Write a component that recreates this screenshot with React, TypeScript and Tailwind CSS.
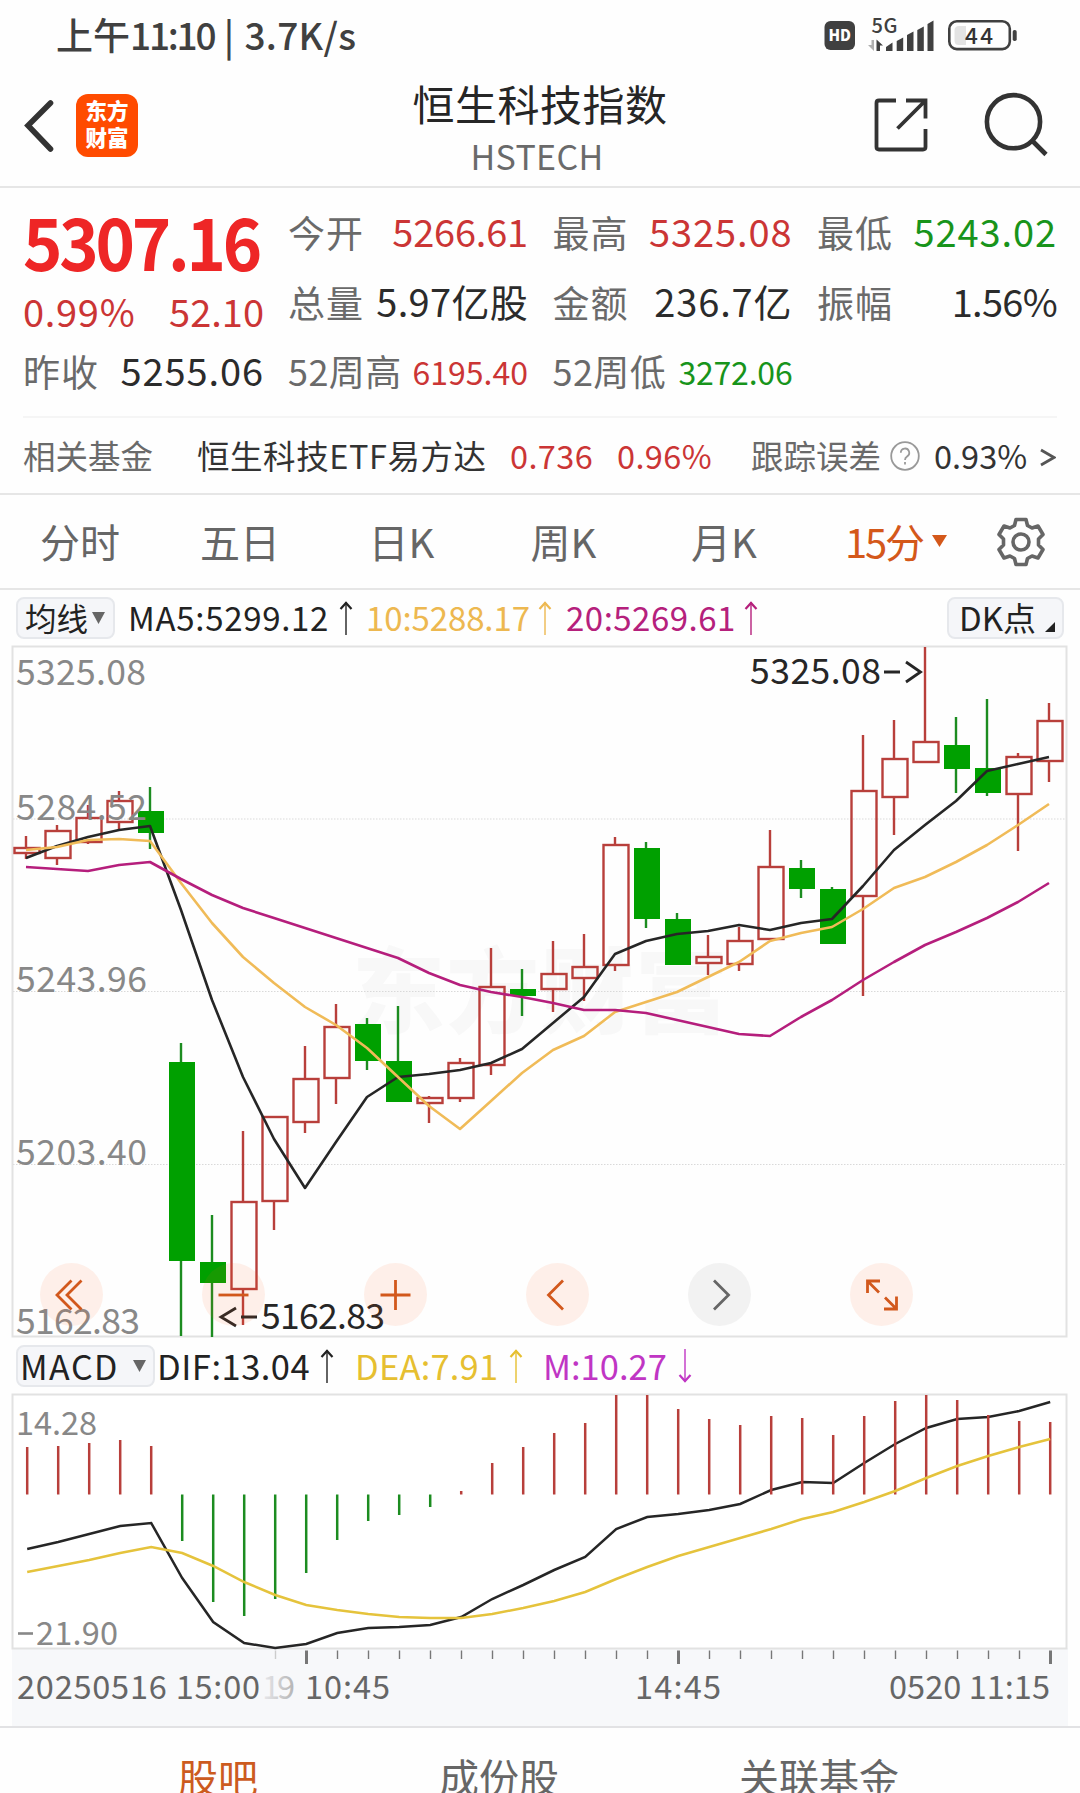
import React from "react";

const RED = "#b83f3b";
const GREEN = "#00a000";

// [high, bodyTop, bodyBottom, low, rising]
const candles: [number, number, number, number, number][] = [
  [836, 848, 853, 859, 1], [825, 831, 858, 865, 1], [805, 818, 842, 844, 1], [791, 801, 822, 830, 1],
  [787, 811, 833, 849, 0], [1043, 1062, 1261, 1336, 0], [1215, 1262, 1283, 1337, 0], [1131, 1202, 1289, 1325, 1],
  [1117, 1117, 1201, 1230, 1], [1046, 1079, 1122, 1133, 1], [1004, 1027, 1078, 1104, 1], [1018, 1024, 1061, 1070, 0],
  [1006, 1061, 1102, 1102, 0], [1096, 1098, 1103, 1123, 1], [1058, 1063, 1098, 1102, 1], [948, 987, 1065, 1075, 1],
  [969, 989, 996, 1016, 0], [941, 974, 989, 1012, 1], [934, 967, 978, 1001, 1], [837, 845, 965, 971, 1],
  [842, 848, 919, 928, 0], [913, 919, 965, 965, 0], [935, 957, 963, 975, 1], [927, 941, 964, 971, 1],
  [830, 867, 939, 939, 1], [860, 868, 889, 898, 0], [887, 889, 944, 944, 0], [735, 791, 896, 996, 1],
  [720, 759, 797, 835, 1], [647, 742, 762, 762, 1], [717, 745, 769, 793, 0], [699, 768, 793, 796, 0],
  [753, 757, 794, 851, 1], [703, 721, 761, 782, 1],
];
const ma5 = [858, 846, 837, 830, 826, 910, 1000, 1077, 1139, 1188, 1142, 1097, 1077, 1074, 1070, 1063, 1049, 1023, 997, 954, 941, 934, 931, 925, 930, 923, 919, 886, 850, 825, 801, 771, 764, 757];
const ma10 = [850, 847, 840, 839, 841, 883, 923, 957, 983, 1007, 1025, 1048, 1077, 1106, 1129, 1101, 1073, 1050, 1036, 1012, 1002, 992, 977, 962, 941, 933, 927, 909, 888, 877, 862, 845, 825, 804];
const ma20 = [867, 869, 871, 865, 862, 879, 895, 908, 918, 928, 938, 948, 958, 973, 985, 992, 997, 1003, 1010, 1010, 1013, 1020, 1027, 1034, 1036, 1017, 1000, 980, 962, 945, 932, 918, 902, 883];
const hist = [1447, 1446, 1443, 1440, 1446, 1541, 1602, 1616, 1599, 1573, 1540, 1521, 1515, 1507, 1491, 1463, 1447, 1433, 1423, 1395, 1395, 1409, 1419, 1425, 1416, 1418, 1435, 1416, 1401, 1395, 1400, 1415, 1421, 1422];
const dif = [1549, 1542, 1534, 1526, 1523, 1578, 1622, 1643, 1648, 1644, 1633, 1628, 1627, 1625, 1617, 1599, 1585, 1570, 1557, 1529, 1517, 1514, 1510, 1504, 1490, 1482, 1483, 1463, 1444, 1428, 1419, 1417, 1411, 1402];
const dea = [1572, 1566, 1560, 1553, 1547, 1553, 1566, 1582, 1595, 1605, 1610, 1614, 1617, 1618, 1618, 1614, 1608, 1601, 1592, 1579, 1567, 1556, 1547, 1538, 1529, 1519, 1512, 1502, 1491, 1478, 1466, 1456, 1447, 1439];

const points = (ys: number[], x0: number) => ys.map((y, i) => `${x0 + i * 31},${y}`).join(" ");

function Label({ x, y, w, size, fill = "#888888", children }: { x: number; y: number; w: number; size: number; fill?: string; children: string }) {
  return (
    <text x={x} y={y} fontSize={size} fill={fill} textLength={w} lengthAdjust="spacing">
      {children}
    </text>
  );
}

function Arrow({ color, down = false }: { color: string; down?: boolean }) {
  return (
    <svg width="14" height="36" viewBox="0 0 14 36" fill="none" stroke={color} className={down ? "rotate-180" : ""}>
      <path d="M7 2V35" strokeWidth="1.4" />
      <path d="M1.5 9L7 3L12.5 9" strokeWidth="2.2" />
    </svg>
  );
}

function Stat({ label, value, tone = "text-[#2b2b2b]", spacing = "tracking-[0.9px]" }: { label: string; value: string; tone?: string; spacing?: string }) {
  const small = label.length > 2;
  return (
    <div className="flex items-center justify-between whitespace-nowrap">
      <span className={small ? "text-[36px] tracking-[0.4px] text-[#6a6a6a]" : "pt-[5px] text-[37px] tracking-[1px] text-[#6a6a6a]"}>{label}</span>
      <span className={`pt-px ${small ? "text-[32px]" : "text-[38px]"} ${spacing} ${tone}`}>{value}</span>
    </div>
  );
}

function StatusBar() {
  return (
    <div className="flex h-[62px] items-center pt-[8px] pr-[62px] pl-[56px] text-[#404040]">
      <span className="text-[37px] font-medium whitespace-pre">
        上午<span className="tracking-[-2.200px]">11:10</span><span className="tracking-[1px]"> | </span><span className="tracking-[0.300px]">3.7K/s</span>
      </span>
      <svg className="mt-px ml-auto overflow-visible" width="194" height="36" viewBox="825 18 194 36">
        <rect x="825.5" y="21" width="30.5" height="29" rx="6" fill="#404040" />
        <text x="829.5" y="41.3" fontSize="16" fontWeight="900" fill="#fff" textLength="22.5" lengthAdjust="spacingAndGlyphs">HD</text>
        <text x="872.5" y="32.8" fontSize="20" fontWeight="500" fill="#404040" textLength="26">5G</text>
        <path d="M875 40v11l-6-6h3.500v-5z" fill="#b0b0b0" />
        <path d="M877.500 51V39.500l6.500 6h-3V51z" fill="#404040" />
        <path d="M887 51v-4l6.500-4.500V51zM897.700 51V41l6.500-3.500V51zM908 51V35l6.500-3.500V51zM918.300 51V30l6.500-3.500V51zM928.500 51V24l6-3.500V51z" fill="#404040" />
        <rect x="950.300" y="21.300" width="60.500" height="27.800" rx="7.500" fill="none" stroke="#404040" strokeWidth="2.600" />
        <path d="M960 26h7v19h-7q-4.500 0-4.500-4.500v-10q0-4.500 4.500-4.500z" fill="#e3e3e3" />
        <text x="966" y="43.500" fontSize="22.500" fontWeight="500" fill="#333" textLength="28">44</text>
        <rect x="1013.700" y="30" width="4" height="11" rx="1.800" fill="#404040" />
      </svg>
    </div>
  );
}

function Header() {
  return (
    <header className="flex h-[126px] items-start border-b-2 border-[#e6e6e6]">
      <div className="flex w-[400px] items-center gap-[20px] pt-[32px] pl-[22px]">
        <svg className="-mt-[3px]" width="34" height="56" viewBox="0 0 34 56" fill="none" stroke="#333" strokeWidth="5.600" strokeLinecap="round">
          <path d="M28.500 7L6 29.500L28.500 53" />
        </svg>
        <div className="flex h-[63px] w-[62px] flex-col items-center justify-center rounded-[12px] bg-[#ff4b00] pb-[5px] text-[21.500px] leading-[27px] font-black text-white">
          <span>东方</span>
          <span>财富</span>
        </div>
      </div>
      <div className="flex w-[280px] flex-col items-center pt-[10px]">
        <h1 className="text-[42px] leading-[62px] tracking-[0.5px] text-[#262626]">恒生科技指数</h1>
        <span className="-mt-[3px] -ml-[6px] text-[34px] leading-[49px] tracking-[0.300px] text-[#6a6a6a]">HSTECH</span>
      </div>
      <div className="ml-auto flex gap-[55px] pt-[30px] pr-[31px]">
        <svg width="54" height="64" viewBox="875 92 54 64" fill="none" stroke="#333" strokeWidth="3.800">
          <path d="M897 100.500H880q-2.500 0-2.500 2.500v44q0 2.500 2.500 2.500h44q2.500 0 2.500-2.500v-18" />
          <path d="M907 100.500h19.500v18M926 101L898.500 128.500" />
        </svg>
        <svg width="66" height="66" viewBox="984 92 66 66" fill="none" stroke="#333" strokeWidth="4.600">
          <circle cx="1014.500" cy="121.700" r="26.600" />
          <path d="M1033 140.500L1047 154.500" />
        </svg>
      </div>
    </header>
  );
}

function Quote() {
  return (
    <section className="border-b-2 border-[#e6e6e6]">
      <div className="mx-[23px] flex border-b-2 border-[#f5f5f5] pt-[7px] pb-[11px]">
        <div className="w-[241px] whitespace-nowrap">
          <div className="flex h-[88px] w-[240px] origin-left scale-x-[0.93] items-center pt-[2px] text-[72px] font-bold tracking-[-3.500px] text-[#ee2626]">5307.16</div>
          <div className="flex h-[52px] items-center justify-between pt-[2px] text-[38px] text-[#cb3535]">
            <span className="tracking-[0.700px]">0.99%</span>
            <span>52.10</span>
          </div>
          <div className="h-[70px] pt-[4px]">
            <Stat label="昨收" value="5255.06" />
          </div>
        </div>
        <div className="ml-[24px] grid w-[769px] grid-cols-[240px_240px_240px] grid-rows-[70px_70px_70px] gap-x-[24.500px]">
          <Stat label="今开" value="5266.61" tone="text-[#cb3535]" spacing="tracking-[-0.200px]" />
          <Stat label="最高" value="5325.08" tone="text-[#cb3535]" />
          <Stat label="最低" value="5243.02" tone="text-[#18941b]" />
          <Stat label="总量" value="5.97亿股" spacing="tracking-[0.300px]" />
          <Stat label="金额" value="236.7亿" />
          <Stat label="振幅" value="1.56%" spacing="tracking-[-0.700px]" />
          <Stat label="52周高" value="6195.40" tone="text-[#cb3535]" spacing="tracking-normal" />
          <Stat label="52周低" value="3272.06" tone="text-[#18941b]" spacing="tracking-[-0.200px]" />
        </div>
      </div>
      <div className="flex h-[75px] items-center pr-[24px] pl-[23px] text-[32.500px] whitespace-nowrap text-[#333]">
        <span className="w-[174px] text-[#6a6a6a]">相关基金</span>
        <span className="w-[313px] tracking-[0.550px]">恒生科技ETF易方达</span>
        <span className="w-[107px] tracking-[0.400px] text-[#cb3535]">0.736</span>
        <span className="w-[134px] tracking-[0.400px] text-[#cb3535]">0.96%</span>
        <span className="text-[#6a6a6a]">跟踪误差</span>
        <svg className="ml-[9px]" width="30" height="30" viewBox="0 0 30 30" fill="none" stroke="#999" strokeWidth="1.800">
          <circle cx="15" cy="15" r="13.800" />
          <path d="M10.800 11.800a4.200 4.200 0 1 1 6.300 3.600q-2.100 1.300-2.100 3.600" />
          <path d="M15 21v2.400" />
        </svg>
        <span className="ml-[14px]">0.93%</span>
        <svg className="mt-[2px] ml-auto" width="16" height="24" viewBox="0 0 16 24" fill="none" stroke="#555" strokeWidth="2.800">
          <path d="M1 5L14 12.500L1 20" />
        </svg>
      </div>
    </section>
  );
}

function Periods() {
  return (
    <nav className="grid h-[95px] grid-cols-[160px_160px_163px_161px_160px_187px_60px] border-b-2 border-[#e6e6e6] text-[40px] text-[#666]">
      {["分时", "五日", "日K", "周K", "月K"].map((t) => (
        <span key={t} className="flex items-center justify-center pb-px">{t}</span>
      ))}
      <span className="flex items-center pb-px pl-[41px] text-[#d4581a]">
        <span className="tracking-[-2.200px]">15</span>分
        <svg className="ml-[7px]" width="15" height="12" viewBox="0 0 15 12"><path d="M0 0h15L7.500 12z" fill="#d4581a" /></svg>
      </span>
      <span className="flex items-center justify-center">
        <svg width="48" height="50" viewBox="-24 -25 48 50" fill="none" stroke="#666" strokeWidth="3.600" strokeLinejoin="round">
          <path d="M-5 -22.500H5L6.500 -16.500L11 -14L17 -16L22 -7.500L17.500 -3V3L22 7.500L17 16L11 14L6.500 16.500L5 22.500H-5L-6.500 16.500L-11 14L-17 16L-22 7.500L-17.500 3V-3L-22 -7.500L-17 -16L-11 -14L-6.500 -16.500Z" />
          <circle r="8" />
        </svg>
      </span>
    </nav>
  );
}

function DownTriangle() {
  return <svg width="13" height="12" viewBox="0 0 13 12"><path d="M0 0h13L6.500 12z" fill="#666" /></svg>;
}

function MaRow() {
  return (
    <div className="flex h-[55px] items-center pr-[16px] pl-[16px] text-[33px] leading-none whitespace-nowrap">
      <button className="flex h-[42px] w-[99px] items-center gap-[4px] rounded-[8px] border-2 border-[#e6e8ec] bg-[#f5f6f9] pl-[7px] text-[31.500px] leading-none text-[#222]">
        均线<DownTriangle />
      </button>
      <span className="ml-[13px] flex w-[238px] items-center gap-[10px] text-[#222]"><span className="tracking-[0.700px]">MA5:5299.12</span><Arrow color="#222" /></span>
      <span className="flex w-[200px] items-center gap-[8px] text-[#edb850]"><span className="tracking-[-0.100px]">10:5288.17</span><Arrow color="#edb850" /></span>
      <span className="flex items-center gap-[8px] text-[#b5207c]"><span className="tracking-[0.500px]">20:5269.61</span><Arrow color="#b5207c" /></span>
      <button className="ml-auto flex h-[42px] w-[117px] items-center rounded-[8px] border-2 border-[#e6e8ec] bg-[#f5f6f9] pl-[10px] text-[33px] leading-none text-[#222]">
        DK点
        <svg className="mt-[18px] ml-[9px]" width="10" height="10" viewBox="0 0 10 10"><path d="M10 0v10H0z" fill="#222" /></svg>
      </button>
    </div>
  );
}

function Candle({ d, i }: { d: [number, number, number, number, number]; i: number }) {
  const [hi, top, bot, lo, up] = d;
  const c = 26 + i * 31;
  if (up) {
    const left = Math.max(c - 11.5, 13.5);
    return (
      <g stroke={RED} strokeWidth="2.400" fill="none">
        <path d={`M${c} ${hi}V${top}M${c} ${bot}V${lo}`} />
        <rect x={left} y={top} width={c + 13.5 - left} height={bot - top} />
      </g>
    );
  }
  return (
    <g>
      <path d={`M${c} ${hi}V${lo}`} stroke="#1c8c20" strokeWidth="2.400" />
      <rect x={c - 12} y={top} width="26" height={bot - top} fill={GREEN} />
    </g>
  );
}

const controls: { name: string; path: string; muted?: boolean }[] = [
  { name: "first", path: "M31.500 17.500L17 32L31.500 46.500M41.500 17.500L27 32L41.500 46.500" },
  { name: "zoom out", path: "M16.500 32h30" },
  { name: "zoom in", path: "M16.500 32h30M31.500 17v30" },
  { name: "previous", path: "M37 17.500L22.500 32L37 46.500" },
  { name: "next", path: "M26 17.500L40.500 32L26 46.500", muted: true },
  { name: "expand", path: "M17.500 30V18H30M18 18.500L29 29.500M46.500 33.500V46H34M46 45.500L35 34.500" },
];

function PriceChart() {
  return (
    <div className="relative h-[693px]">
      <svg className="block" width="1080" height="693" viewBox="0 645 1080 693">
        <text x="352" y="1026" fontSize="93" fontWeight="900" fill="#f8f8f8" textLength="376">东方财富</text>
        {[819, 991.5, 1164.5].map((y) => (
          <path key={y} d={`M13 ${y}H1067`} stroke="#d9d9d9" strokeWidth="1.200" strokeDasharray="1.500 1.500" />
        ))}
        <rect x="12.500" y="646.500" width="1054" height="690" fill="none" stroke="#e2e2e2" strokeWidth="2" />
        {candles.map((d, i) => <Candle key={i} d={d} i={i} />)}
        <g fill="none" strokeWidth="2.600" strokeLinejoin="round">
          <polyline points={points(ma5, 26)} stroke="#262626" />
          <polyline points={points(ma10, 26)} stroke="#f0bb58" />
          <polyline points={points(ma20, 26)} stroke="#b51e7c" />
        </g>
        <Label x={16} y={685} w={130} size={35.5}>5325.08</Label>
        <Label x={16} y={820} w={131} size={35.5}>5284.52</Label>
        <Label x={16} y={992} w={131} size={35.5}>5243.96</Label>
        <Label x={16} y={1164.5} w={131} size={35.5}>5203.40</Label>
        <Label x={16} y={1333.5} w={124} size={35.5}>5162.83</Label>
        <Label x={750} y={684} w={131} size={35.5} fill="#262626">5325.08</Label>
        <path d="M884 672h16M906 662L920.500 672L906 682" fill="none" stroke="#262626" strokeWidth="2.800" />
        <Label x={261} y={1329} w={124} size={35.5} fill="#262626">5162.83</Label>
        <path d="M257 1317h-16M236 1308L221 1317L236 1326" fill="none" stroke="#262626" strokeWidth="2.800" />
      </svg>
      <div className="absolute top-[618px] left-[40px] flex gap-[99px]">
        {controls.map((c) => (
          <button key={c.name} aria-label={c.name} className={c.muted ? "h-[63px] w-[63px] rounded-full bg-[#999999]/12" : "h-[63px] w-[63px] rounded-full bg-[#ff5a14]/9"}>
            <svg width="63" height="63" viewBox="0 0 63 63" fill="none" stroke={c.muted ? "#666" : "#d2581c"} strokeWidth="2.800">
              <path d={c.path} />
            </svg>
          </button>
        ))}
      </div>
    </div>
  );
}

function MacdRow() {
  return (
    <div className="flex h-[55px] items-center pl-[16px] text-[34.500px] leading-none whitespace-nowrap">
      <button className="flex h-[42px] w-[139px] items-center justify-between rounded-[8px] border-2 border-[#e6e8ec] bg-[#f5f6f9] pr-[7px] pl-[2px] text-[34px] leading-none text-[#222]">
        <span className="tracking-[1.500px]">MACD</span><DownTriangle />
      </button>
      <span className="ml-[2px] flex w-[198px] items-center gap-[10px] text-[#222]"><span className="tracking-[0.500px]">DIF:13.04</span><Arrow color="#222" /></span>
      <span className="flex w-[188px] items-center gap-[11px] text-[#e6bf30]"><span className="tracking-[0.200px]">DEA:7.91</span><Arrow color="#e6bf30" /></span>
      <span className="flex items-center gap-[11px] text-[#c035c4]"><span>M:10.27</span><Arrow color="#c035c4" down /></span>
    </div>
  );
}

function MacdChart() {
  return (
    <svg className="block" width="1080" height="333" viewBox="0 1393 1080 333">
      <defs>
        <linearGradient id="fade" x1="262" x2="296" y1="0" y2="0" gradientUnits="userSpaceOnUse">
          <stop offset="0" stopColor="#e9e9ec" />
          <stop offset="1" stopColor="#b2b2b2" />
        </linearGradient>
      </defs>
      <rect x="12" y="1648" width="1056" height="78" fill="#f7f8fa" />
      <rect x="12.500" y="1394.500" width="1054" height="254" fill="#fff" stroke="#e2e2e2" strokeWidth="2" />
      <polyline points={points(dif, 27.2)} fill="none" stroke="#262626" strokeWidth="2.500" />
      {hist.map((y, i) => (
        <path key={i} d={`M${27.2 + i * 31} ${y}V1494.500`} stroke={y < 1494 ? RED : "#1c8c20"} strokeWidth="2.500" />
      ))}
      <polyline points={points(dea, 27.2)} fill="none" stroke="#e5c33c" strokeWidth="2.500" />
      <Label x={16} y={1434.5} w={81} size={32.5}>14.28</Label>
      <path d="M18 1633.500h15" stroke="#888" strokeWidth="2.600" />
      <Label x={36} y={1644.5} w={82} size={32.5}>21.90</Label>
      {hist.map((_, i) =>
        i < 8 ? null : (
          <path
            key={i}
            d={`M${27.5 + i * 31} 1650.500V${i === 9 || i === 21 || i === 33 ? 1664 : 1659}`}
            stroke={i === 8 ? "#ccc" : "#777"}
            strokeWidth={i === 9 || i === 21 || i === 33 ? 3 : 1.4}
          />
        ),
      )}
      <Label x={17} y={1698.5} w={243} size={32.5} fill="#666">20250516 15:00</Label>
      <Label x={262} y={1698.5} w={33} size={32.5} fill="url(#fade)">19</Label>
      <Label x={305} y={1698.5} w={85} size={32.5} fill="#666">10:45</Label>
      <Label x={635} y={1698.5} w={86} size={32.5} fill="#666">14:45</Label>
      <Label x={889} y={1698.5} w={161} size={32.5} fill="#666">0520 11:15</Label>
    </svg>
  );
}

export default function App() {
  return (
    <main className="h-[1793px] w-[1080px] overflow-hidden bg-[#fefefe] font-['Noto_Sans_CJK_SC','Noto_Sans',sans-serif]">
      <StatusBar />
      <Header />
      <Quote />
      <Periods />
      <MaRow />
      <PriceChart />
      <MacdRow />
      <MacdChart />
      <nav className="flex h-[68px] items-start border-t-2 border-[#e2e2e4] pt-[19px] pl-[178px] text-[40px] leading-[58px] text-[#666]">
        <span className="w-[261px] text-[#cc5b1f]">股吧</span>
        <span className="w-[300px]">成份股</span>
        <span>关联基金</span>
      </nav>
    </main>
  );
}
